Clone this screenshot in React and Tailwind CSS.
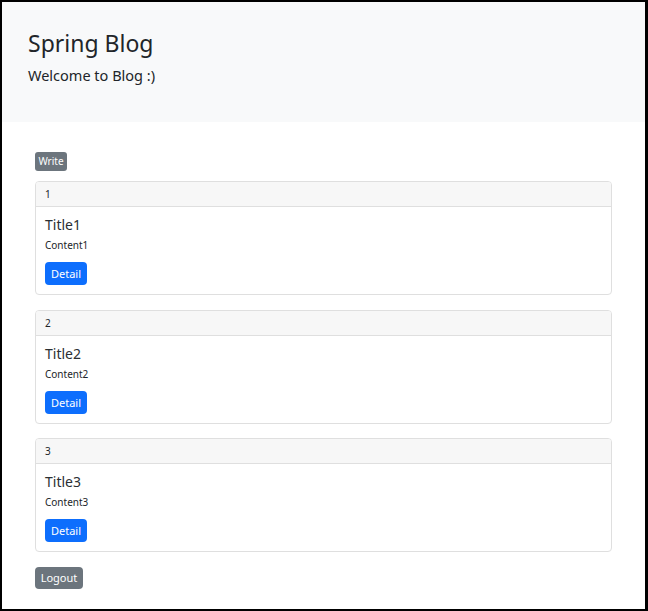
export default function App() {
  const posts = [
    { id: 1, title: 'Title1', content: 'Content1' },
    { id: 2, title: 'Title2', content: 'Content2' },
    { id: 3, title: 'Title3', content: 'Content3' },
  ]

  return (
    <div className="w-[648px] h-[611px] bg-white border-black border-t-2 border-l-2 border-r-[3px] border-b-[2px] text-[#212529] font-['Noto_Sans',sans-serif] overflow-hidden">
      {/* Jumbotron */}
      <div className="h-[120px] bg-[#f8f9fa] pl-[26px] pt-[24px]">
        <h1 className="text-[23px] leading-[34px] font-normal">Spring Blog</h1>
        <p className="text-[14.5px] leading-[20px] mt-[5px]">Welcome to Blog :)</p>
      </div>

      <main className="pl-[33px] pr-[33px] pt-[30px]">
        <button className="block h-[19px] w-[32px] rounded-[3px] bg-[#6c757d] text-white text-[10px] leading-[19px] text-center">Write</button>

        <div className="mt-[10px] flex flex-col gap-[14.5px]">
          {posts.map(p => (
            <div key={p.id} className="h-[114px] border border-[#dfdfdf] rounded-[4px] overflow-hidden">
              <div className="h-[25px] bg-[#f7f7f7] border-b border-[#dfdfdf] pl-[9px] text-[10px] leading-[24px]">{p.id}</div>
              <div className="pl-[9px] pt-[10px]">
                <h5 className="text-[14px] leading-[16px] text-[#2b2f33]">{p.title}</h5>
                <p className="text-[10px] leading-[14px] mt-[5px]">{p.content}</p>
                <button className="block mt-[10px] h-[23px] w-[42px] rounded-[4px] bg-[#0d6efd] text-white text-[11px] leading-[23px] text-center">Detail</button>
              </div>
            </div>
          ))}
        </div>

        <button className="block mt-[15px] h-[22px] w-[48px] rounded-[4px] bg-[#6c757d] text-white text-[11px] leading-[22px] text-center">Logout</button>
      </main>
    </div>
  )
}
